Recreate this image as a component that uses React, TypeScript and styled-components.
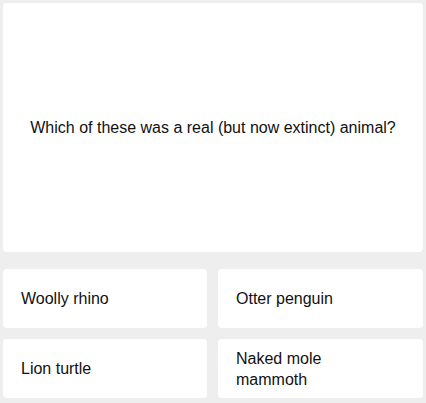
import React from "react";
import styled, { createGlobalStyle } from "styled-components";

const Global = createGlobalStyle`
  html, body { margin: 0; padding: 0; background: #eeeeee; }
  body { font-family: "Liberation Sans", Arial, sans-serif; color: #111; }
`;

const Page = styled.div`
  width: 426px;
  height: 403px;
  box-sizing: border-box;
  padding: 3px 3px 5px 3px;
  display: flex;
  flex-direction: column;
  gap: 17px;
`;

const QuestionCard = styled.div`
  height: 249px;
  background: #fff;
  border-radius: 4px;
  display: flex;
  align-items: center;
  justify-content: center;
  font-size: 16px;
  text-align: center;
`;

const Answers = styled.div`
  display: grid;
  grid-template-columns: 204px 205px;
  grid-template-rows: 59px 59px;
  column-gap: 11px;
  row-gap: 11px;
`;

const Answer = styled.div`
  background: #fff;
  border-radius: 4px;
  display: flex;
  align-items: center;
  padding: 0 40px 0 18px;
  font-size: 16px;
  line-height: 21px;
`;

const answers = ["Woolly rhino", "Otter penguin", "Lion turtle", "Naked mole mammoth"];

export default function App() {
  return (
    <>
      <Global />
      <Page>
        <QuestionCard>Which of these was a real (but now extinct) animal?</QuestionCard>
        <Answers>
          {answers.map((a) => (
            <Answer key={a}>{a}</Answer>
          ))}
        </Answers>
      </Page>
    </>
  );
}
